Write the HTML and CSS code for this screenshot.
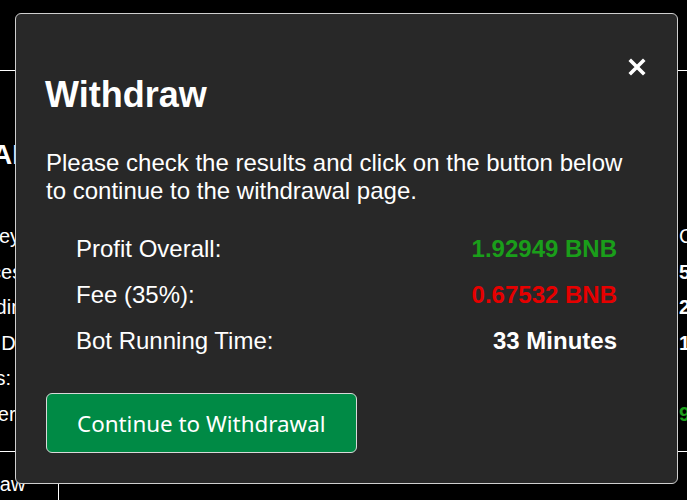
FILE: index.html
```html
<!DOCTYPE html>
<html lang="en">
<head>
    <meta charset="UTF-8">
    <meta name="viewport" content="width=device-width, initial-scale=1.0">
    <title>Withdraw</title>
    <link rel="stylesheet" href="styles.css">
</head>
<body>
    <div class="page">
        <header class="topbar"></header>

        <div class="stats">
            <h1 class="stats-title">AI Trading Bot</h1>
            <div class="stat-row"><span>Money</span><span class="val-light">Connected</span></div>
            <div class="stat-row"><span>Process:</span><span class="val">57.2041 BNB</span></div>
            <div class="stat-row"><span>Pending</span><span class="val">25.1180 BNB</span></div>
            <div class="stat-row"><span>End Date:</span><span class="val">1 Day</span></div>
            <div class="stat-row"><span>Stats:</span><span></span></div>
            <div class="stat-row"><span>Genera</span><span class="val green">92949 BNB</span></div>
        </div>

        <div class="bottom-table">
            <div class="cell">Withdraw</div>
        </div>
    </div>

    <div class="modal">
        <div class="modal-head">
            <h2>Withdraw</h2>
            <button class="close" aria-label="Close">
                <svg width="18" height="18" viewBox="0 0 18 18">
                    <path d="M3 3 L15 15 M15 3 L3 15" stroke="#fff" stroke-width="3.6" stroke-linecap="square"/>
                </svg>
            </button>
        </div>
        <p class="intro">Please check the results and click on the button below to continue to the withdrawal page.</p>

        <div class="results">
            <div class="result-row">
                <span>Profit Overall:</span>
                <strong class="green">1.92949 BNB</strong>
            </div>
            <div class="result-row">
                <span>Fee (35%):</span>
                <strong class="red">0.67532 BNB</strong>
            </div>
            <div class="result-row">
                <span>Bot Running Time:</span>
                <strong>33 Minutes</strong>
            </div>
        </div>

        <button class="continue">Continue to Withdrawal</button>
    </div>
</body>
</html>
```

FILE: styles.css
```css
body {
    margin: 0;
    padding: 0;
    overflow: hidden;
    background: #000;
    color: #fff;
    font-family: 'Liberation Sans', Arial, sans-serif;
    height: 100vh;
}

.page {
    width: 100%;
}

.topbar {
    height: 70px;
    border-bottom: 1px solid #fff;
}

.stats {
    margin-left: -40px;
    font-size: 20px;
}

.stats-title {
    font-size: 28px;
    line-height: 32px;
    margin: 68px 0 48px;
    padding-left: 32px;
    white-space: nowrap;
}

.stat-row {
    display: grid;
    grid-template-columns: 719px auto;
    height: 35.6px;
    line-height: 35.6px;
    white-space: nowrap;
}

.val {
    font-weight: bold;
}

.val-light {
    font-weight: normal;
}

.green {
    color: #1a9e1a;
}

.red {
    color: #e60000;
}

.bottom-table {
    margin-top: 18px;
    border-top: 1px solid #fff;
    font-size: 20px;
}

.cell {
    width: 116px;
    margin-left: -58px;
    padding: 21px 0 20px;
    text-align: left;
    border-right: 1px solid #fff;
}

.modal {
    position: fixed;
    top: 13px;
    left: 15px;
    width: 601px;
    padding: 44px 30px 30px;
    background: #282828;
    border: 1px solid #cfcfcf;
    border-radius: 6px;
    font-size: 24px;
}

.modal-head {
    display: flex;
    justify-content: space-between;
    align-items: flex-start;
}

.modal-head h2 {
    font-size: 36px;
    margin: 16px 0 0 -1px;
    line-height: normal;
}

.close {
    background: none;
    border: none;
    padding: 0;
    margin-right: 1px;
    cursor: pointer;
    line-height: 0;
}

.intro {
    margin: 33px 0 0;
    line-height: 28px;
}

.results {
    margin: 21px 30px 0;
}

.result-row {
    display: flex;
    justify-content: space-between;
    padding: 9px 0;
    line-height: 28px;
}

.continue {
    margin-top: 29px;
    height: 60px;
    padding: 0 30px;
    background: #008a45;
    color: #fff;
    border: 1px solid #d9d9d9;
    border-radius: 6px;
    font-family: 'Noto Sans', sans-serif;
    font-size: 22.4px;
    cursor: pointer;
}
```
